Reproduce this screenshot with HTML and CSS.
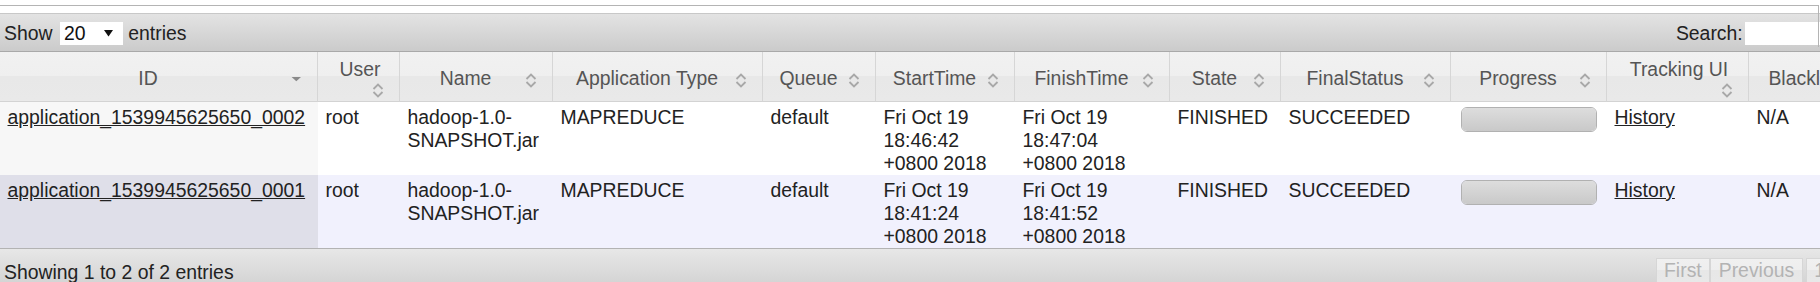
FILE: index.html
```html
<!DOCTYPE html>
<html>
<head>
<meta charset="utf-8">
<title>Applications</title>
<link rel="stylesheet" href="styles.css">
</head>
<body>
<div class="page">
  <div class="frame"></div>
  <div class="wrapper">
    <div class="toolbar toolbar-top">
      <div class="length">Show <span class="select"><span>20</span><svg class="arrow" width="9" height="7" viewBox="0 0 9 7"><polygon points="0,0 9,0 4.5,6.5" fill="#111"/></svg></span> entries</div>
      <div class="filter">Search:<span class="search"></span></div>
    </div>
    <table class="apps">
      <colgroup>
        <col class="c-id"><col class="c-user"><col class="c-name"><col class="c-type"><col class="c-queue"><col class="c-start"><col class="c-finish"><col class="c-state"><col class="c-final"><col class="c-prog"><col class="c-track"><col class="c-black">
      </colgroup>
      <thead>
        <tr>
          <th>ID<span class="sort"><svg width="24" height="19" viewBox="0 0 24 19"><polygon points="10.6,6 20,6 15.3,10.2" fill="#8a8a8a"/></svg></span></th>
          <th>User<span class="sort wrapped"><svg width="24" height="19" viewBox="0 0 24 19"><polyline points="10.5,8 15,3.5 19.5,8" fill="none" stroke="#a8a8a8" stroke-width="1.8"/><polyline points="10.5,11 15,15.5 19.5,11" fill="none" stroke="#a8a8a8" stroke-width="1.8"/></svg></span></th>
          <th>Name<span class="sort"><svg width="24" height="19" viewBox="0 0 24 19"><polyline points="10.5,8 15,3.5 19.5,8" fill="none" stroke="#a8a8a8" stroke-width="1.8"/><polyline points="10.5,11 15,15.5 19.5,11" fill="none" stroke="#a8a8a8" stroke-width="1.8"/></svg></span></th>
          <th>Application Type<span class="sort"><svg width="24" height="19" viewBox="0 0 24 19"><polyline points="10.5,8 15,3.5 19.5,8" fill="none" stroke="#a8a8a8" stroke-width="1.8"/><polyline points="10.5,11 15,15.5 19.5,11" fill="none" stroke="#a8a8a8" stroke-width="1.8"/></svg></span></th>
          <th>Queue<span class="sort"><svg width="24" height="19" viewBox="0 0 24 19"><polyline points="10.5,8 15,3.5 19.5,8" fill="none" stroke="#a8a8a8" stroke-width="1.8"/><polyline points="10.5,11 15,15.5 19.5,11" fill="none" stroke="#a8a8a8" stroke-width="1.8"/></svg></span></th>
          <th>StartTime<span class="sort"><svg width="24" height="19" viewBox="0 0 24 19"><polyline points="10.5,8 15,3.5 19.5,8" fill="none" stroke="#a8a8a8" stroke-width="1.8"/><polyline points="10.5,11 15,15.5 19.5,11" fill="none" stroke="#a8a8a8" stroke-width="1.8"/></svg></span></th>
          <th>FinishTime<span class="sort"><svg width="24" height="19" viewBox="0 0 24 19"><polyline points="10.5,8 15,3.5 19.5,8" fill="none" stroke="#a8a8a8" stroke-width="1.8"/><polyline points="10.5,11 15,15.5 19.5,11" fill="none" stroke="#a8a8a8" stroke-width="1.8"/></svg></span></th>
          <th>State<span class="sort"><svg width="24" height="19" viewBox="0 0 24 19"><polyline points="10.5,8 15,3.5 19.5,8" fill="none" stroke="#a8a8a8" stroke-width="1.8"/><polyline points="10.5,11 15,15.5 19.5,11" fill="none" stroke="#a8a8a8" stroke-width="1.8"/></svg></span></th>
          <th>FinalStatus<span class="sort"><svg width="24" height="19" viewBox="0 0 24 19"><polyline points="10.5,8 15,3.5 19.5,8" fill="none" stroke="#a8a8a8" stroke-width="1.8"/><polyline points="10.5,11 15,15.5 19.5,11" fill="none" stroke="#a8a8a8" stroke-width="1.8"/></svg></span></th>
          <th>Progress<span class="sort"><svg width="24" height="19" viewBox="0 0 24 19"><polyline points="10.5,8 15,3.5 19.5,8" fill="none" stroke="#a8a8a8" stroke-width="1.8"/><polyline points="10.5,11 15,15.5 19.5,11" fill="none" stroke="#a8a8a8" stroke-width="1.8"/></svg></span></th>
          <th>Tracking UI<span class="sort wrapped"><svg width="24" height="19" viewBox="0 0 24 19"><polyline points="10.5,8 15,3.5 19.5,8" fill="none" stroke="#a8a8a8" stroke-width="1.8"/><polyline points="10.5,11 15,15.5 19.5,11" fill="none" stroke="#a8a8a8" stroke-width="1.8"/></svg></span></th>
          <th>Blacklisted Nodes<span class="sort"><svg width="24" height="19" viewBox="0 0 24 19"><polyline points="10.5,8 15,3.5 19.5,8" fill="none" stroke="#a8a8a8" stroke-width="1.8"/><polyline points="10.5,11 15,15.5 19.5,11" fill="none" stroke="#a8a8a8" stroke-width="1.8"/></svg></span></th>
        </tr>
      </thead>
      <tbody>
        <tr class="odd">
          <td class="sorted"><a href="#">application_1539945625650_0002</a></td>
          <td>root</td>
          <td>hadoop-1.0-SNAPSHOT.jar</td>
          <td>MAPREDUCE</td>
          <td>default</td>
          <td class="time">Fri Oct 19 18:46:42 +0800 2018</td>
          <td class="time">Fri Oct 19 18:47:04 +0800 2018</td>
          <td>FINISHED</td>
          <td>SUCCEEDED</td>
          <td><div class="progress" title="100.0%"><div class="progress-value"></div></div></td>
          <td><a href="#">History</a></td>
          <td>N/A</td>
        </tr>
        <tr class="even">
          <td class="sorted"><a href="#">application_1539945625650_0001</a></td>
          <td>root</td>
          <td>hadoop-1.0-SNAPSHOT.jar</td>
          <td>MAPREDUCE</td>
          <td>default</td>
          <td class="time">Fri Oct 19 18:41:24 +0800 2018</td>
          <td class="time">Fri Oct 19 18:41:52 +0800 2018</td>
          <td>FINISHED</td>
          <td>SUCCEEDED</td>
          <td><div class="progress" title="100.0%"><div class="progress-value"></div></div></td>
          <td><a href="#">History</a></td>
          <td>N/A</td>
        </tr>
      </tbody>
    </table>
    <div class="toolbar toolbar-bottom">
      <div class="info">Showing 1 to 2 of 2 entries</div>
      <div class="paging">
        <span class="btn">First</span><span class="btn">Previous</span><span class="btn gap">1</span><span class="btn gap">Next</span><span class="btn gap">Last</span>
      </div>
    </div>
  </div>
</div>
</body>
</html>
```

FILE: styles.css
```css
html, body {
  margin: 0;
  padding: 0;
  overflow: hidden;
  background: #ffffff;
}

body {
  font-family: "Liberation Sans", Arial, sans-serif;
  font-size: 19.4px;
  line-height: 23.2px;
  color: #222222;
}

.page {
  position: relative;
  padding-top: 13px;
}

.frame {
  position: absolute;
  left: 0;
  top: 5px;
  width: 1819px;
  height: 42px;
  box-sizing: border-box;
  border-top: 1px solid #b4b4b4;
  border-right: 1px solid #b4b4b4;
  pointer-events: none;
}

.wrapper {
  width: 1964px;
}

.toolbar {
  display: flex;
  justify-content: space-between;
  align-items: flex-start;
  color: #222222;
}

.toolbar-top {
  background: linear-gradient(#e3e3e3, #cbcbcb);
  border-top: 1px solid #c8c8c8;
  border-bottom: 1px solid #a9a9a9;
  padding: 8px 2px 5.8px 4px;
}

.length {
  white-space: nowrap;
}

.select {
  display: inline-flex;
  align-items: center;
  justify-content: space-between;
  box-sizing: border-box;
  width: 63px;
  height: 23px;
  margin-left: 2px;
  padding: 0 10px 0 4px;
  background: #ffffff;
  vertical-align: top;
  color: #111111;
}

.arrow {
  display: block;
}

.filter {
  display: flex;
  align-items: flex-start;
}

.search {
  display: block;
  width: 217px;
  height: 23px;
  margin-left: 2.3px;
  background: #ffffff;
}

.apps {
  width: 1964px;
  table-layout: fixed;
  border-collapse: separate;
  border-spacing: 0;
  border-bottom: 1px solid #b3b3b3;
}

.c-id { width: 318px; }
.c-user { width: 82px; }
.c-name { width: 153px; }
.c-type { width: 210px; }
.c-queue { width: 113px; }
.c-start { width: 139px; }
.c-finish { width: 155px; }
.c-state { width: 111px; }
.c-final { width: 170px; }
.c-prog { width: 156px; }
.c-track { width: 142px; }
.c-black { width: 215px; }

.apps thead tr {
  height: 50px;
}

.apps th {
  padding: 4.5px 12px 0 15px;
  vertical-align: middle;
  text-align: center;
  font-weight: normal;
  color: #555555;
  background: linear-gradient(#f1f1f1 0%, #efefef 50%, #e8e8e8 50%, #e9e9e9 100%);
  border-right: 1px solid #d6d6d6;
  border-bottom: 1px solid #d3d3d3;
}

.sort {
  float: right;
  width: 24px;
  height: 18.6px;
  margin-top: 3.5px;
}

.sort svg {
  display: block;
}

.sort.wrapped {
  margin-top: 0;
}

.apps td {
  padding: 3.5px 7.5px 0 7.5px;
  vertical-align: top;
  color: #222222;
}

.apps td.time {
  padding-right: 14px;
}

.apps a {
  color: #222222;
  text-decoration: underline;
}

.odd td {
  background: #ffffff;
}

.odd td.sorted {
  background: #f7f7f7;
}

.even td {
  background: #f1f1fd;
}

.even td.sorted {
  background: #dfdfe9;
}

.progress {
  box-sizing: border-box;
  width: 136px;
  height: 25px;
  margin: 1.2px 0 0 2px;
  border: 1px solid #b1b1b1;
  border-radius: 6px;
  background: #ffffff;
  overflow: hidden;
}

.progress-value {
  width: 100%;
  height: 100%;
  background: linear-gradient(#dddddd, #c9c9c9);
}

.toolbar-bottom {
  height: 40px;
  background: linear-gradient(#e7e7e7, #cccccc);
  padding: 9px 14px 0 4px;
}

.info {
  padding-top: 2.3px;
}

.paging {
  display: flex;
}

.btn {
  display: block;
  padding: 0 7.5px;
  border: 1px solid #d6d6d6;
  background: linear-gradient(#f0f0f0 0%, #eeeeee 50%, #e7e7e7 50%, #e8e8e8 100%);
  color: #b3b3b3;
}

.btn.gap {
  margin-left: 3px;
}
```
